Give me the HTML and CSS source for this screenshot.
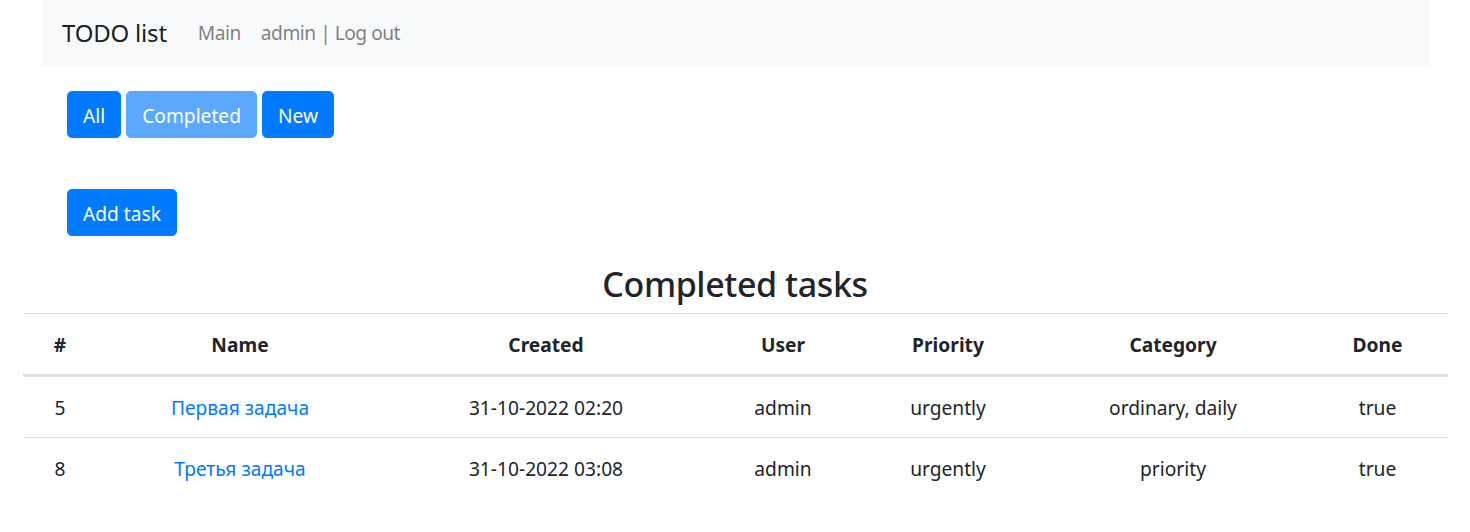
FILE: index.html
```html
<!DOCTYPE html>
<html lang="en">
<head>
<meta charset="utf-8">
<title>TODO list</title>
<link rel="stylesheet" href="styles.css">
</head>
<body>
<nav class="navbar">
  <a class="brand" href="#">TODO list</a>
  <a class="nav-link" href="#">Main</a>
  <a class="nav-link" href="#">admin | Log out</a>
</nav>
<div class="filters">
  <a class="btn" href="#">All</a>
  <a class="btn btn-disabled" href="#">Completed</a>
  <a class="btn" href="#">New</a>
</div>
<div class="actions">
  <a class="btn" href="#">Add task</a>
</div>
<h2 class="title">Completed tasks</h2>
<table class="tasks">
  <colgroup>
    <col class="c1"><col class="c2"><col class="c3"><col class="c4"><col class="c5"><col class="c6"><col class="c7">
  </colgroup>
  <thead>
    <tr><th>#</th><th>Name</th><th>Created</th><th>User</th><th>Priority</th><th>Category</th><th>Done</th></tr>
  </thead>
  <tbody>
    <tr><td>5</td><td><a href="#">Первая задача</a></td><td>31-10-2022 02:20</td><td>admin</td><td>urgently</td><td>ordinary, daily</td><td>true</td></tr>
    <tr><td>8</td><td><a href="#">Третья задача</a></td><td>31-10-2022 03:08</td><td>admin</td><td>urgently</td><td>priority</td><td>true</td></tr>
  </tbody>
</table>
</body>
</html>
```
FILE: styles.css
```css
* { box-sizing: border-box; }
body {
  margin: 0;
  font-family: "Noto Sans", "Open Sans", sans-serif;
  font-size: 19.2px;
  line-height: 28.8px;
  color: #212529;
  background: #fff;
}
a { text-decoration: none; }

.navbar {
  margin: 0 41px 0 42px;
  height: 66px;
  background: #f8f9fa;
  display: flex;
  align-items: center;
  padding: 0 20px;
}
.brand {
  font-size: 24px;
  color: rgba(0,0,0,.9);
  margin-right: 21px;
  line-height: 36px;
  letter-spacing: -0.2px;
}
.nav-link {
  color: rgba(0,0,0,.5);
  padding: 0 10px;
  letter-spacing: -0.5px;
}

.filters {
  margin: 25px 0 0 67px;
  display: flex;
  gap: 5px;
}
.actions {
  margin: 51px 0 0 67px;
  display: flex;
}
.btn {
  display: inline-block;
  background: #007bff;
  border: 1px solid #007bff;
  color: #fff;
  border-radius: 4.8px;
  padding: 9px 15px 7px;
  line-height: 29px;
  font-size: 19.2px;
}
.btn-disabled {
  background: #5aa9ff;
  border-color: #5aa9ff;
}

.title {
  margin: 25px 0 6px;
  text-align: center;
  font-size: 34px;
  font-weight: 500;
  line-height: 46px;
  letter-spacing: -0.4px;
}

.tasks {
  margin: 0 22px 0 23px;
  width: 1425px;
  border-collapse: collapse;
  table-layout: fixed;
}
.c1 { width: 74px; }
.c2 { width: 286px; }
.c3 { width: 326px; }
.c4 { width: 148px; }
.c5 { width: 182px; }
.c6 { width: 268px; }
.c7 { width: 141px; }
.tasks th, .tasks td {
  text-align: center;
  padding: 15.5px 10px;
  line-height: 29px;
  border-top: 1px solid #dee2e6;
}
.tasks th {
  font-weight: 700;
  border-bottom: 3px solid #dee2e6;
}
.tasks td a { color: #007bff; }
```
